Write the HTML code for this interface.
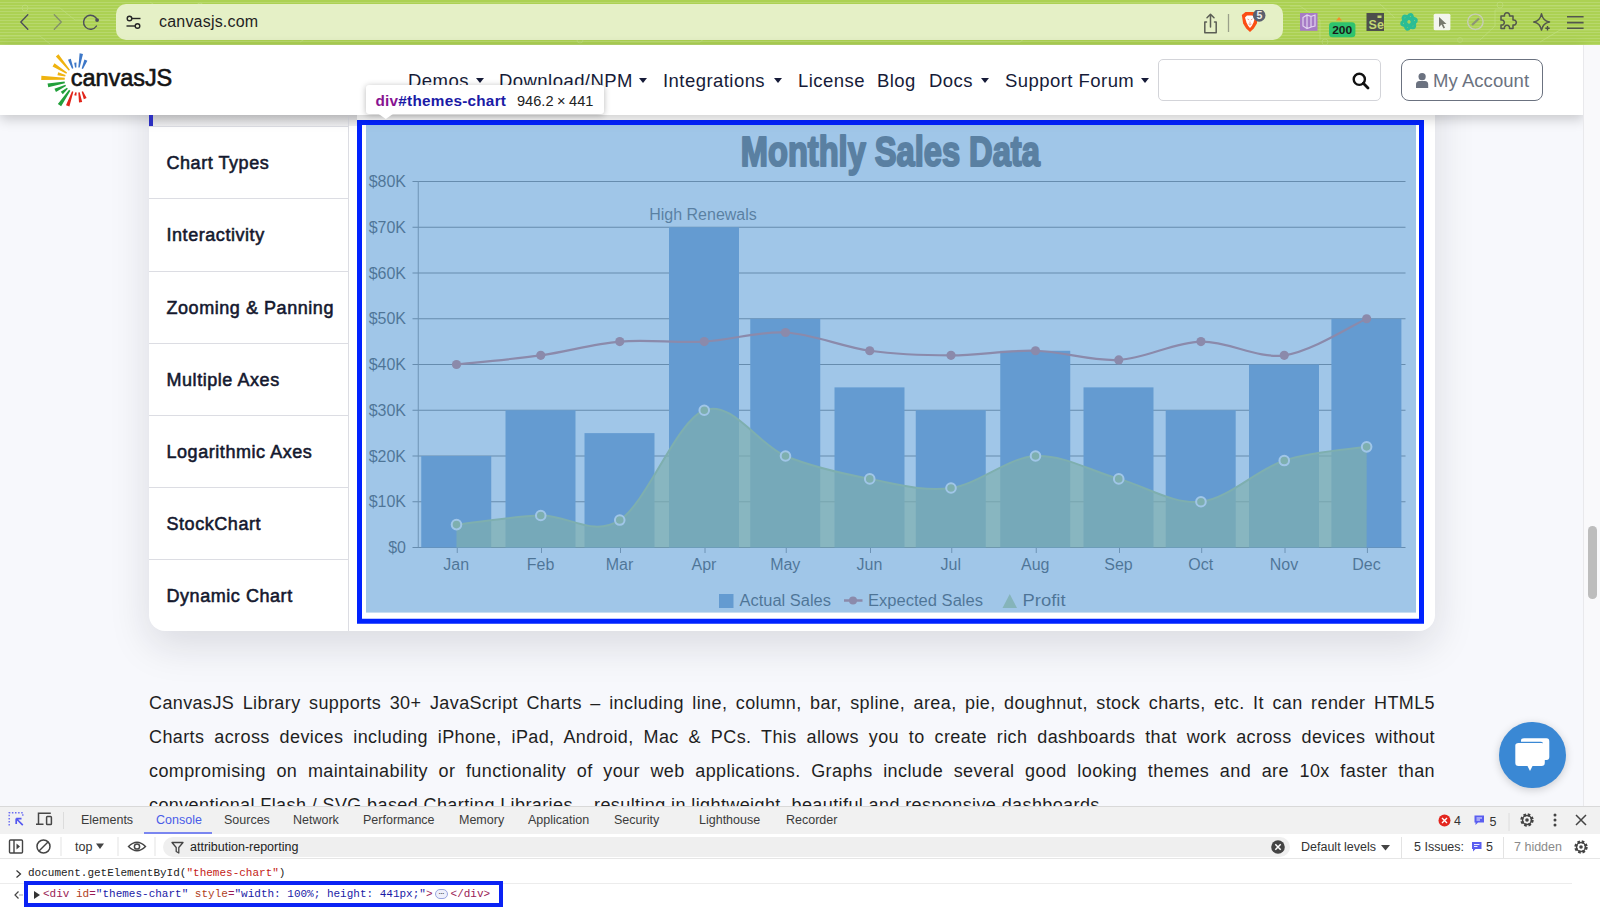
<!DOCTYPE html>
<html><head><meta charset="utf-8">
<style>
*{margin:0;padding:0;box-sizing:border-box}
html,body{width:1600px;height:908px;overflow:hidden;background:#f7f8fc;font-family:"Liberation Sans",sans-serif}
.abs{position:absolute}
#toolbar{position:absolute;left:0;top:0;width:1600px;height:45px;background:repeating-linear-gradient(180deg,#acd153 0px,#acd153 1.5px,#b8d86d 1.5px,#b8d86d 3px);overflow:hidden}
#addr{position:absolute;left:116px;top:4px;width:1167px;height:36px;background:#e5f0c6;border-radius:10px}
#addr .url{position:absolute;left:43px;top:9px;font-size:16px;color:#1f1f1f;letter-spacing:0.2px}
#header{position:absolute;left:0;top:45px;width:1584px;height:70px;background:#fff;box-shadow:0 4px 12px rgba(0,0,0,.2);z-index:5}
.nav{position:absolute;top:25px;font-size:18.5px;letter-spacing:0.45px;color:#161b38;white-space:nowrap}
.caret{position:absolute;top:33px;width:0;height:0;border-left:4.5px solid transparent;border-right:4.5px solid transparent;border-top:5px solid #161b38}
#search{position:absolute;left:1158px;top:14px;width:223px;height:41.5px;border:1px solid #d3d4d9;border-radius:5px}
#acct{position:absolute;left:1401px;top:14px;width:142px;height:41.5px;border:1.5px solid #6b7280;border-radius:8px;color:#6b7280;font-size:18.5px}
#card{position:absolute;left:149px;top:60px;width:1286px;height:571px;background:#fff;border-radius:16px;box-shadow:0 14px 40px rgba(20,20,40,.13)}
#side{position:absolute;left:149px;top:115px;width:200px;height:516px;border-right:1px solid #dcdde3}
.item{position:absolute;left:0;width:199px;height:72px;border-top:1px solid #dcdde3}
.item span{position:absolute;left:17.5px;top:26px;font-size:18px;font-weight:normal;color:#14182e;white-space:nowrap;letter-spacing:0.55px;-webkit-text-stroke:0.55px #14182e}
#para{position:absolute;left:149px;top:686px;width:1286px;font-size:18px;line-height:34px;color:#1f1f1f;letter-spacing:0.4px}
#para div{text-align:justify;text-align-last:justify;white-space:nowrap;height:34px}
#para div.last{text-align-last:left}
#chat{position:absolute;left:1499px;top:721.5px;width:66.5px;height:66.5px;border-radius:50%;background:#3a88d4;box-shadow:0 2px 8px rgba(0,0,0,.18)}
#scroll{position:absolute;left:1583px;top:45px;width:17px;height:761px;background:#f9f9fb;border-left:1px solid #e9e9ec;z-index:8}
#thumb{position:absolute;left:4px;top:480.7px;width:8.7px;height:73.3px;border-radius:4.3px;background:#bdbdbd}
#dev{position:absolute;left:0;top:806px;width:1600px;height:102px;background:#fff;z-index:10}
#tabs{position:absolute;left:0;top:0;width:1600px;height:27.5px;background:#f1f1f1;border-top:1px solid #d9d9d9}
.tab{position:absolute;top:6px;font-size:12.5px;color:#3b3b3b;white-space:nowrap}
#bar2{position:absolute;left:0;top:27.5px;width:1600px;height:25.5px;background:#fff;border-bottom:1px solid #e6e6e6}
.mono{font-family:"Liberation Mono",monospace}
#tip{position:absolute;left:366px;top:85px;width:238px;height:28.6px;background:#fff;border-radius:3px;box-shadow:0 1px 6px rgba(0,0,0,.28);z-index:20;font-size:14px;white-space:nowrap}
</style></head><body>

<div id="toolbar">
  <svg class="abs" style="left:0;top:0" width="1600" height="45">
    <g stroke="#c4e188" stroke-width="1" fill="none" opacity="0.55">
      <path d="M0,8H60L75,20H110M0,36H40L50,44M150,2L162,10H240M300,42L312,34H400M460,4H520L530,12M620,42H700L710,34M800,6H880M950,42H1020L1030,34M1120,4H1180M1290,6H1300L1320,20V40M1330,4H1380L1395,18M1420,40H1480L1495,26V10H1520M1540,42L1560,30H1600M1530,6H1600"/>
      <circle cx="25" cy="8" r="3"/><circle cx="200" cy="6" r="3"/><circle cx="580" cy="40" r="3"/><circle cx="1325" cy="42" r="3"/><circle cx="1500" cy="5" r="3"/><circle cx="1460" cy="40" r="2.5"/>
    </g>
    <!-- back -->
    <path d="M27.8,14.8L20.8,22L27.8,29.3" fill="none" stroke="#4c4e5a" stroke-width="1.35" stroke-linecap="round" stroke-linejoin="round"/>
    <path d="M54.3,14.8L61.3,22L54.3,29.3" fill="none" stroke="#83916a" stroke-width="1.35" stroke-linecap="round" stroke-linejoin="round"/>
    <path d="M97.3,20.3A7,7 0 1 0 96.5,26" fill="none" stroke="#4c4e5a" stroke-width="1.4" stroke-linecap="round"/>
    <circle cx="97.1" cy="20.1" r="1.9" fill="#4c4e5a"/>
  </svg>
  <div id="addr">
    <svg class="abs" style="left:9px;top:11px" width="18" height="16">
      <g fill="none" stroke="#262626" stroke-width="1.4">
        <circle cx="4.5" cy="3.5" r="2.3"/><path d="M6.8,3.5H15.5"/>
        <circle cx="12.5" cy="11" r="2.3"/><path d="M1.5,11H10.2"/>
      </g>
    </svg>
    <div class="url">canvasjs.com</div>
    <svg class="abs" style="left:1084px;top:8px" width="80" height="24">
      <g fill="none" stroke="#5b5e55" stroke-width="1.5" stroke-linecap="round" stroke-linejoin="round">
        <path d="M6.5,10H4.8V20.8H16.2V10H14.5"/><path d="M10.5,15V2.5M7,5.8L10.5,2.3L14,5.8"/>
      </g>
      <path d="M28.5,2V20" stroke="#9aa08a" stroke-width="1.3"/>
    </svg>
    <svg class="abs" style="left:1124px;top:6px" width="34" height="30">
      <path d="M1.8,5L5.5,2H13.5L17.6,5L17.4,8L16.9,13.5L13.8,18.5L10,22L6.2,18.5L3.1,13.5L2.3,8Z" fill="#fb4e14"/>
      <path d="M5,7.5L7,5.5H12.5L14.8,8L13.5,12.5L12,15.5L10,18L8,15.5L6.5,12.5Z" fill="#fff"/>
      <path d="M7.5,9L9.2,10M12.5,9L10.8,10M10,11.5V14.5M8.5,14L10,15.2L11.5,14" stroke="#f3917a" stroke-width="0.9" fill="none"/>
      <circle cx="19.2" cy="5.4" r="6.3" fill="#5b5f6e"/>
      <text x="19.3" y="9.1" font-size="10.5" font-weight="bold" fill="#eee" text-anchor="middle" font-family="Liberation Sans">5</text>
    </svg>
  </div>
  <svg class="abs" style="left:1290px;top:0" width="310" height="45">
    <!-- purple ext -->
    <rect x="10" y="13" width="17.5" height="17.8" fill="#a77bc6"/>
    <path d="M13,17.5L17,15L21,16.5V27L17,28.5L13,26Z M17,15V28.5 M21,16.5L25,15V26L21,27" fill="none" stroke="#e2d3ef" stroke-width="1.2"/>
    <!-- 200 -->
    <path d="M49,17L52,20.5H46Z" fill="#f38d2d"/>
    <rect x="39" y="22.3" width="26.4" height="15" rx="3.5" fill="#2fc36e"/>
    <text x="52.2" y="34.3" font-size="11.5" font-weight="bold" fill="#1a1a1a" text-anchor="middle" font-family="Liberation Sans" textLength="20" lengthAdjust="spacingAndGlyphs">200</text>
    <!-- Se -->
    <rect x="76.5" y="13" width="17.5" height="18" fill="#4d4f4c"/>
    <text x="78.6" y="29" font-size="12.5" font-weight="bold" fill="#c3d873" font-family="Liberation Sans">Se</text>
    <rect x="87.5" y="15.5" width="4" height="2.5" fill="#c3d873"/>
    <!-- chatgpt -->
    <g transform="translate(119,21.9) rotate(15)" fill="none" stroke="#2bbd95" stroke-width="3">
      <ellipse rx="3.2" ry="7.6" transform="rotate(0)"/><ellipse rx="3.2" ry="7.6" transform="rotate(60)"/><ellipse rx="3.2" ry="7.6" transform="rotate(120)"/>
    </g>
    <!-- cursor -->
    <rect x="143.7" y="13.8" width="16.7" height="16.4" rx="1.5" fill="#f3f5ee"/>
    <path d="M149,17L149,27L151.5,24.5L153.5,28.5L155,27.8L153.2,24H156.5Z" fill="#77796f"/>
    <!-- circle pen -->
    <circle cx="185.4" cy="21.8" r="7.7" fill="none" stroke="#c7cdb7" stroke-width="1.4"/>
    <path d="M182,25L189,18.5" stroke="#8d9378" stroke-width="2.2"/>
    <!-- puzzle -->
    <path d="M211,17.5H214.5A2.6,2.6 0 1 1 219.5,17.5H223V21.5A2.6,2.6 0 1 1 223,26.5V30H219.5A2.6,2.6 0 1 0 214.5,30H211V26.5A2.6,2.6 0 1 0 211,21.5Z" fill="none" stroke="#52564c" stroke-width="1.5" stroke-linejoin="round" transform="translate(0,-1.5)"/>
    <!-- sparkle -->
    <path d="M251.5,13.8Q253,21 259.5,22Q253,23 251.5,30Q250,23 243.7,22Q250,21 251.5,13.8Z" fill="none" stroke="#52564c" stroke-width="1.5" stroke-linejoin="round"/>
    <path d="M257.5,26V30.5M255.3,28.2H259.7" stroke="#4b4f45" stroke-width="1.4"/>
    <!-- hamburger -->
    <path d="M277,16.8H293.6M277,22.6H293.6M277,28.2H293.6" stroke="#52564c" stroke-width="1.6"/>
  </svg>
</div>

<div id="header">
  <svg class="abs" style="left:0;top:-45px" width="200" height="115">
    <path fill="#efb30f" d="M55.84,56.38 L68.86,70.64 L69.94,69.76 L58.46,54.22Z M52.55,66.43 L66.33,73.69 L67.07,72.51 L54.45,63.37Z M57.42,75.25 L65.22,76.48 L65.58,75.12 L58.18,72.35Z M41.21,79.90 L64.71,79.65 L64.79,77.85 L41.39,75.70Z"/>
<path fill="#22a03b" d="M48.25,87.37 L64.89,83.19 L64.61,81.61 L47.55,83.43Z M55.96,91.93 L66.00,86.03 L65.40,84.77 L54.44,88.67Z M62.83,94.23 L67.85,88.84 L66.95,87.76 L60.77,91.77Z M61.15,106.33 L70.36,90.75 L69.04,89.85 L57.85,104.07Z"/>
<path fill="#e1251b" d="M69.40,106.45 L73.36,91.83 L72.04,91.37 L66.00,105.25Z M76.38,95.83 L76.68,92.45 L75.32,92.15 L74.22,95.37Z M82.18,101.94 L79.69,92.19 L78.31,92.41 L79.02,102.46Z M86.59,98.03 L82.95,91.33 L81.65,91.87 L83.81,99.17Z"/>
<path fill="#3d77c7" d="M67.99,59.75 L72.04,68.74 L73.36,68.26 L70.81,58.75Z M74.20,62.69 L75.00,67.56 L76.40,67.44 L76.40,62.51Z M79.62,53.32 L78.31,67.39 L79.69,67.61 L82.98,53.88Z M84.42,59.58 L81.65,68.53 L82.95,69.07 L87.38,60.82Z"/>
    <text x="70.8" y="86.2" font-family="Liberation Sans" font-size="23.5" fill="#141414" stroke="#141414" stroke-width="0.6" textLength="101.5" lengthAdjust="spacing">canvasJS</text>
  </svg>
  <div class="nav" style="left:408px">Demos</div><div class="caret" style="left:476px"></div>
  <div class="nav" style="left:499px">Download/NPM</div><div class="caret" style="left:639px"></div>
  <div class="nav" style="left:663px">Integrations</div><div class="caret" style="left:774px"></div>
  <div class="nav" style="left:798px">License</div>
  <div class="nav" style="left:877px">Blog</div>
  <div class="nav" style="left:929px">Docs</div><div class="caret" style="left:980.5px"></div>
  <div class="nav" style="left:1005px">Support Forum</div><div class="caret" style="left:1141px"></div>
  <div id="search">
    <svg class="abs" style="left:193px;top:12px" width="18" height="18">
      <circle cx="7.3" cy="7.3" r="5.6" fill="none" stroke="#111" stroke-width="2.4"/>
      <path d="M11.3,11.3L16,16" stroke="#111" stroke-width="2.8" stroke-linecap="round"/>
    </svg>
  </div>
  <div id="acct">
    <svg class="abs" style="left:14px;top:12.5px" width="14" height="17">
      <circle cx="6.1" cy="3.7" r="3.6" fill="#6b7280"/>
      <path d="M0,15V11.6Q0,7.9 3.4,7.9H8.8Q12.2,7.9 12.2,11.6V15Z" fill="#6b7280"/>
    </svg>
    <span style="position:absolute;left:31px;top:10.3px;letter-spacing:0.05px">My Account</span>
  </div>
</div>

<div id="card"></div>
<div class="abs" style="left:149px;top:115px;width:4px;height:10.5px;background:#2c2fc0;z-index:6"></div>
<div class="abs" style="left:149px;top:115px;width:208px;height:11px;background:linear-gradient(#dcdcde,#efeff1)"></div>
<div id="side">
  <div class="item" style="top:11.1px"><span>Chart Types</span></div>
  <div class="item" style="top:83.3px"><span>Interactivity</span></div>
  <div class="item" style="top:155.5px"><span>Zooming &amp; Panning</span></div>
  <div class="item" style="top:227.8px"><span>Multiple Axes</span></div>
  <div class="item" style="top:300px"><span>Logarithmic Axes</span></div>
  <div class="item" style="top:372.2px"><span>StockChart</span></div>
  <div class="item" style="top:444.4px"><span>Dynamic Chart</span></div>
</div>

<!--CHART-->
<svg class="abs" style="left:0;top:0" width="1600" height="908" viewBox="0 0 1600 908">
<defs><clipPath id="cc"><rect x="366" y="125" width="1050" height="487.6"/></clipPath></defs>
<rect x="362" y="125" width="1057" height="494" fill="#fff"/>
<g clip-path="url(#cc)">
<rect x="366" y="125" width="1050" height="487.6" fill="#fff"/>
<path d="M412.5,501.75H1405.5 M412.5,456.00H1405.5 M412.5,410.25H1405.5 M412.5,364.50H1405.5 M412.5,318.75H1405.5 M412.5,273.00H1405.5 M412.5,227.25H1405.5 M412.5,181.50H1405.5" stroke="#555" stroke-width="1.05" fill="none"/>
<path d="M412.5,547.5H1405.5" stroke="#555" stroke-width="1.1"/>
<path d="M418.25,181V547.5" stroke="#6b6b6b" stroke-width="1"/>
<path d="M457.25,547.5V553 M541.50,547.5V553 M620.50,547.5V553 M705.00,547.5V553 M786.25,547.5V553 M870.50,547.5V553 M951.75,547.5V553 M1036.25,547.5V553 M1119.50,547.5V553 M1201.70,547.5V553 M1285.00,547.5V553 M1367.40,547.5V553" stroke="#6b6b6b" stroke-width="1"/>
<g fill="#4f81bc">
<rect x="421.25" y="456.00" width="70" height="91.50"/>
<rect x="505.50" y="410.25" width="70" height="137.25"/>
<rect x="584.50" y="433.12" width="70" height="114.38"/>
<rect x="669.00" y="227.25" width="70" height="320.25"/>
<rect x="750.25" y="318.75" width="70" height="228.75"/>
<rect x="834.50" y="387.38" width="70" height="160.12"/>
<rect x="915.75" y="410.25" width="70" height="137.25"/>
<rect x="1000.25" y="350.77" width="70" height="196.73"/>
<rect x="1083.50" y="387.38" width="70" height="160.12"/>
<rect x="1165.70" y="410.25" width="70" height="137.25"/>
<rect x="1249.00" y="364.50" width="70" height="183.00"/>
<rect x="1331.40" y="318.75" width="70" height="228.75"/>
</g>
<path d="M456.50,524.62 C470.54,523.10 513.54,516.24 540.75,515.48 C567.96,514.71 592.50,537.59 619.75,520.05 C647.00,502.51 676.62,420.93 704.25,410.25 C731.88,399.57 757.92,444.56 785.50,456.00 C813.08,467.44 842.17,473.54 869.75,478.88 C897.33,484.21 923.38,491.84 951.00,488.02 C978.62,484.21 1007.54,457.52 1035.50,456.00 C1063.46,454.48 1091.17,471.25 1118.75,478.88 C1146.33,486.50 1173.37,504.80 1200.95,501.75 C1228.53,498.70 1256.63,469.72 1284.25,460.57 C1311.87,451.43 1352.92,449.14 1366.65,446.85 L1366.65,547.5 L456.50,547.5 Z" fill="#9bbb58" fill-opacity="0.7"/>
<path d="M456.50,524.62 C470.54,523.10 513.54,516.24 540.75,515.48 C567.96,514.71 592.50,537.59 619.75,520.05 C647.00,502.51 676.62,420.93 704.25,410.25 C731.88,399.57 757.92,444.56 785.50,456.00 C813.08,467.44 842.17,473.54 869.75,478.88 C897.33,484.21 923.38,491.84 951.00,488.02 C978.62,484.21 1007.54,457.52 1035.50,456.00 C1063.46,454.48 1091.17,471.25 1118.75,478.88 C1146.33,486.50 1173.37,504.80 1200.95,501.75 C1228.53,498.70 1256.63,469.72 1284.25,460.57 C1311.87,451.43 1352.92,449.14 1366.65,446.85" fill="none" stroke="#9bbb58" stroke-width="2"/>
<path d="M456.50,364.50 C470.54,362.98 513.54,359.16 540.75,355.35 C567.96,351.54 592.50,343.91 619.75,341.62 C647.00,339.34 676.62,343.15 704.25,341.62 C731.88,340.10 757.92,330.95 785.50,332.48 C813.08,334.00 842.17,346.96 869.75,350.77 C897.33,354.59 923.38,355.35 951.00,355.35 C978.62,355.35 1007.54,350.01 1035.50,350.77 C1063.46,351.54 1091.17,361.45 1118.75,359.92 C1146.33,358.40 1173.37,342.39 1200.95,341.62 C1228.53,340.86 1256.63,359.16 1284.25,355.35 C1311.87,351.54 1352.92,324.85 1366.65,318.75" fill="none" stroke="#c0504e" stroke-width="2.2"/>
<g fill="#c0504e"><circle cx="456.50" cy="364.50" r="4.6"/><circle cx="540.75" cy="355.35" r="4.6"/><circle cx="619.75" cy="341.62" r="4.6"/><circle cx="704.25" cy="341.62" r="4.6"/><circle cx="785.50" cy="332.48" r="4.6"/><circle cx="869.75" cy="350.77" r="4.6"/><circle cx="951.00" cy="355.35" r="4.6"/><circle cx="1035.50" cy="350.77" r="4.6"/><circle cx="1118.75" cy="359.92" r="4.6"/><circle cx="1200.95" cy="341.62" r="4.6"/><circle cx="1284.25" cy="355.35" r="4.6"/><circle cx="1366.65" cy="318.75" r="4.6"/></g>
<g fill="#9bbb58" stroke="#fff" stroke-width="2"><circle cx="456.50" cy="524.62" r="4.8"/><circle cx="540.75" cy="515.48" r="4.8"/><circle cx="619.75" cy="520.05" r="4.8"/><circle cx="704.25" cy="410.25" r="4.8"/><circle cx="785.50" cy="456.00" r="4.8"/><circle cx="869.75" cy="478.88" r="4.8"/><circle cx="951.00" cy="488.02" r="4.8"/><circle cx="1035.50" cy="456.00" r="4.8"/><circle cx="1118.75" cy="478.88" r="4.8"/><circle cx="1200.95" cy="501.75" r="4.8"/><circle cx="1284.25" cy="460.57" r="4.8"/><circle cx="1366.65" cy="446.85" r="4.8"/></g>
<g font-family="Liberation Sans" font-size="16" fill="#111" text-anchor="end">
<text x="406" y="553.00">$0</text>
<text x="406" y="507.25">$10K</text>
<text x="406" y="461.50">$20K</text>
<text x="406" y="415.75">$30K</text>
<text x="406" y="370.00">$40K</text>
<text x="406" y="324.25">$50K</text>
<text x="406" y="278.50">$60K</text>
<text x="406" y="232.75">$70K</text>
<text x="406" y="187.00">$80K</text>
</g>
<g font-family="Liberation Sans" font-size="16" fill="#111" text-anchor="middle">
<text x="456.25" y="570">Jan</text>
<text x="540.50" y="570">Feb</text>
<text x="619.50" y="570">Mar</text>
<text x="704.00" y="570">Apr</text>
<text x="785.25" y="570">May</text>
<text x="869.50" y="570">Jun</text>
<text x="950.75" y="570">Jul</text>
<text x="1035.25" y="570">Aug</text>
<text x="1118.50" y="570">Sep</text>
<text x="1200.70" y="570">Oct</text>
<text x="1284.00" y="570">Nov</text>
<text x="1366.40" y="570">Dec</text>
</g>
<text x="703" y="220" font-family="Liberation Sans" font-size="16" fill="#333" text-anchor="middle">High Renewals</text>
<text x="740.8" y="166.2" font-family="Liberation Sans" font-weight="bold" font-size="42.5" fill="#333" stroke="#333" stroke-width="2.2" stroke-linejoin="round" textLength="299"  lengthAdjust="spacingAndGlyphs">Monthly Sales Data</text>
<rect x="719" y="594" width="14.5" height="14" fill="#4f81bc"/>
<path d="M844,600.5H862.5" stroke="#c0504e" stroke-width="2.5"/><circle cx="853" cy="600.5" r="4" fill="#c0504e"/>
<path d="M1002.5,608 L1009.75,594 L1017,608Z" fill="#9bbb58" fill-opacity="0.8"/>
<g font-family="Liberation Sans" font-size="16" fill="#111">
<text x="739.5" y="605.5" textLength="91.5" lengthAdjust="spacingAndGlyphs">Actual Sales</text><text x="868" y="605.5" textLength="115" lengthAdjust="spacingAndGlyphs">Expected Sales</text><text x="1022.5" y="605.5" textLength="43" lengthAdjust="spacingAndGlyphs">Profit</text>
</g>
</g>
<rect x="366" y="125" width="1050" height="487.6" fill="rgb(111,168,220)" fill-opacity="0.66"/>
<path d="M359.5,122.5H1421.5V621.3H359.5Z" fill="none" stroke="#0022ff" stroke-width="5"/>
</svg>
<!--/CHART-->

<div id="tip">
  <span style="position:absolute;left:9.5px;top:6.5px;font-weight:bold;font-size:15.3px;letter-spacing:0.25px"><span style="color:#881391">div</span><span style="color:#1a1aa6">#themes-chart</span></span>
  <span style="position:absolute;left:151px;top:7.5px;color:#222;font-size:14.6px">946.2<span style="margin:0 3.5px">×</span>441</span>
</div>
<svg class="abs" style="left:370px;top:110px;z-index:21" width="30" height="12"><path d="M8,3.6L15.8,9L23.6,3.6Z" fill="#fff"/><rect x="6" y="0" width="20" height="3.7" fill="#fff"/></svg>

<div id="para">
  <div>CanvasJS Library supports 30+ JavaScript Charts – including line, column, bar, spline, area, pie, doughnut, stock charts, etc. It can render HTML5</div>
  <div>Charts across devices including iPhone, iPad, Android, Mac &amp; PCs. This allows you to create rich dashboards that work across devices without</div>
  <div>compromising on maintainability or functionality of your web applications. Graphs include several good looking themes and are 10x faster than</div>
  <div class="last">conventional Flash / SVG based Charting Libraries – resulting in lightweight, beautiful and responsive dashboards.</div>
</div>

<div id="chat">
  <svg class="abs" style="left:0;top:0" width="67" height="67">
    <path d="M22,18.5Q22,16.3 25,16.3H47.5Q50.3,16.3 50.3,19.5V35Q50.3,38 47.5,38H44V21.5Q44,19.8 42,19.8H22Z" fill="#fff"/>
    <path d="M16.3,23.5Q16.3,21 19.5,21H42.5Q45.8,21 45.8,24.5V40.8Q45.8,44 42.5,44H33.5L31,49L28.5,44H19.5Q16.3,44 16.3,40.8Z" fill="#fff"/>
  </svg>
</div>
<div id="scroll"><div id="thumb"></div></div>

<div id="dev">
  <div id="tabs">
    <svg class="abs" style="left:7px;top:5px" width="50" height="20">
      <path d="M2.2,13.6V0.8H15.8V5" fill="none" stroke="#6a6cf2" stroke-width="1.4" stroke-dasharray="1.5,1.6"/>
      <path d="M15.8,13.2L9.6,7M9.2,6.6V12M9.2,6.6H14.5" fill="none" stroke="#5558f0" stroke-width="1.7"/>
      <path d="M31.5,12.2V1.3H43.8M29,12.3H36.5" fill="none" stroke="#474747" stroke-width="1.5"/>
      <rect x="39.6" y="4.6" width="4.8" height="8" rx="0.8" fill="none" stroke="#474747" stroke-width="1.5"/>
    </svg>
    <div class="abs" style="left:63px;top:5px;width:1px;height:17px;background:#dcdcdc"></div>
    <div class="tab" style="left:81px">Elements</div>
    <div class="tab" style="left:156px;color:#4a5ce8">Console</div>
    <div class="abs" style="left:144px;top:24.5px;width:68px;height:2px;background:#7a86f0"></div>
    <div class="tab" style="left:224px">Sources</div>
    <div class="tab" style="left:293px">Network</div>
    <div class="tab" style="left:363px">Performance</div>
    <div class="tab" style="left:459px">Memory</div>
    <div class="tab" style="left:528px">Application</div>
    <div class="tab" style="left:614px">Security</div>
    <div class="tab" style="left:699px">Lighthouse</div>
    <div class="tab" style="left:786px">Recorder</div>
    <svg class="abs" style="left:1436px;top:6px" width="164" height="18">
      <circle cx="8.5" cy="7.5" r="6" fill="#e3261e"/>
      <path d="M6,5L11,10M11,5L6,10" stroke="#fff" stroke-width="1.4"/>
      <text x="18" y="12" font-size="12.5" fill="#333" font-family="Liberation Sans">4</text>
      <path d="M38.5,2.5H48V9.5H42L39.5,12V9.5H38.5Z" fill="#5a5ef0"/>
      <path d="M40.5,5H46M40.5,7H44" stroke="#fff" stroke-width="0.9"/>
      <text x="53.5" y="12.5" font-size="12.5" fill="#333" font-family="Liberation Sans">5</text>
      <path d="M73,0V18" stroke="#dcdcdc"/>
      <g transform="translate(91,7)"><circle r="5.2" fill="none" stroke="#444" stroke-width="3" stroke-dasharray="2.4,1.7"/><circle r="4.5" fill="none" stroke="#444" stroke-width="1.4"/><circle r="1.8" fill="#444"/></g>
      <circle cx="119" cy="2" r="1.5" fill="#444"/><circle cx="119" cy="7" r="1.5" fill="#444"/><circle cx="119" cy="12" r="1.5" fill="#444"/>
      <path d="M140,2L150,12M150,2L140,12" stroke="#444" stroke-width="1.5"/>
    </svg>
  </div>
  <div id="bar2">
    <svg class="abs" style="left:0;top:0" width="300" height="26">
      <rect x="9.5" y="6" width="13" height="13" rx="1" fill="none" stroke="#444" stroke-width="1.4"/>
      <path d="M14,6V19" stroke="#444" stroke-width="1.4"/><path d="M16.5,9.5L20,12.5L16.5,15.5Z" fill="#444"/>
      <circle cx="43.5" cy="12.5" r="6.5" fill="none" stroke="#444" stroke-width="1.5"/><path d="M39,17L48,8" stroke="#444" stroke-width="1.5"/>
      <path d="M61,3V22" stroke="#e3e3e3"/>
      <text x="75" y="17" font-size="12.5" fill="#333" font-family="Liberation Sans">top</text>
      <path d="M96,9.5H104L100,15Z" fill="#444"/>
      <path d="M118,3V22" stroke="#e3e3e3"/>
      <path d="M128.5,12.5Q137,4 145.5,12.5Q137,21 128.5,12.5Z" fill="none" stroke="#444" stroke-width="1.4"/><circle cx="137" cy="12.5" r="2.6" fill="none" stroke="#444" stroke-width="1.5"/>
      <path d="M155,3V22" stroke="#e3e3e3"/>
    </svg>
    <div class="abs" style="left:163px;top:3px;width:1127px;height:20.5px;border-radius:10px;background:#efefef"></div>
    <svg class="abs" style="left:170px;top:6px" width="16" height="15"><path d="M2,2.5H13L8.8,7.5V13L6.2,11.5V7.5Z" fill="none" stroke="#444" stroke-width="1.3" stroke-linejoin="round"/></svg>
    <div class="abs" style="left:190px;top:6px;font-size:12.5px;color:#222">attribution-reporting</div>
    <svg class="abs" style="left:1270px;top:5px" width="16" height="16"><circle cx="8" cy="8" r="6.8" fill="#444"/><path d="M5.3,5.3L10.7,10.7M10.7,5.3L5.3,10.7" stroke="#fff" stroke-width="1.5"/></svg>
    <div class="abs" style="left:1301px;top:6px;font-size:12.5px;color:#333">Default levels</div>
    <svg class="abs" style="left:1380px;top:10px" width="12" height="8"><path d="M1,1H10L5.5,6.5Z" fill="#444"/></svg>
    <div class="abs" style="left:1401px;top:3px;width:1px;height:21px;background:#e3e3e3"></div>
    <div class="abs" style="left:1414px;top:6px;font-size:12.5px;color:#333">5 Issues:</div>
    <svg class="abs" style="left:1471px;top:7px" width="12" height="12"><path d="M1,1H10.5V8H4.5L2,10.5V8H1Z" fill="#5a5ef0"/><path d="M3,3.5H8.5M3,5.5H6.5" stroke="#fff" stroke-width="0.9"/></svg>
    <div class="abs" style="left:1486px;top:6px;font-size:12.5px;color:#333">5</div>
    <div class="abs" style="left:1503px;top:3px;width:1px;height:21px;background:#e3e3e3"></div>
    <div class="abs" style="left:1514px;top:6px;font-size:12.5px;color:#8a8a8a">7 hidden</div>
    <svg class="abs" style="left:1573px;top:6px" width="16" height="16"><g transform="translate(8,7)"><circle r="5.2" fill="none" stroke="#444" stroke-width="3" stroke-dasharray="2.4,1.7"/><circle r="4.5" fill="none" stroke="#444" stroke-width="1.4"/><circle r="1.8" fill="#444"/></g></svg>
  </div>
  <svg class="abs" style="left:14px;top:63px" width="10" height="10"><path d="M2.5,1.5L6.5,5L2.5,8.5" fill="none" stroke="#333" stroke-width="1.2"/></svg>
  <div class="abs mono" style="left:28px;top:61px;font-size:11px;color:#222;white-space:nowrap">document.getElementById(<span style="color:#c41a16">"themes-chart"</span>)</div>
  <div class="abs" style="left:0;top:76.5px;width:1572px;height:1px;background:#ececec"></div>
  <svg class="abs" style="left:13px;top:84px" width="12" height="10"><path d="M5.5,1.5L2,5L5.5,8.5" fill="none" stroke="#444" stroke-width="1.2"/><path d="M6.5,5H9.5" stroke="#444" stroke-width="1.2" stroke-dasharray="1,1"/></svg>
  <div class="abs" style="left:24px;top:75px;width:478.5px;height:26px;border:4px solid #0a22f4;background:#fff"></div>
  <svg class="abs" style="left:33px;top:84px" width="8" height="10"><path d="M1,1L7,5L1,9Z" fill="#333"/></svg>
  <div class="abs mono" style="left:43px;top:81.5px;font-size:11px;white-space:nowrap;color:#9a1a55">&lt;div <span style="color:#b0401c">id</span>=<span style="color:#1a1aa6">"themes-chart"</span> <span style="color:#b0401c">style</span>=<span style="color:#1a1aa6">"width: 100%; height: 441px;"</span>&gt;<span style="display:inline-block;width:13px;height:10px;border-radius:5px;border:1px solid #9aa6e0;background:#eef0fb;color:#333;font-size:9px;line-height:5px;text-align:center;vertical-align:middle;margin:0 3px 0 2px;letter-spacing:-1px">…</span>&lt;/div&gt;</div>
</div>

</body></html>
